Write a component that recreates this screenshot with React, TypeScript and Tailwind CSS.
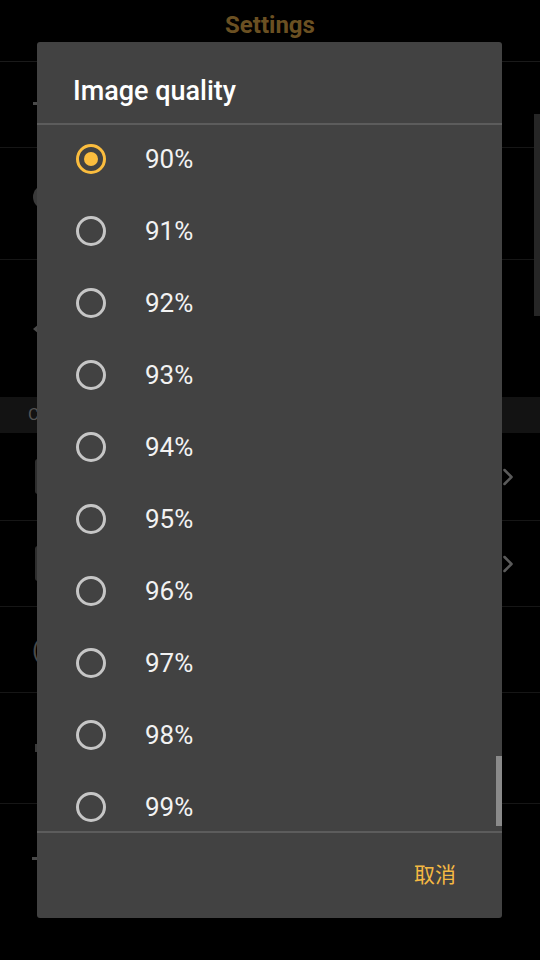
import { ChevronRight } from 'lucide-react';

const options = [90, 91, 92, 93, 94, 95, 96, 97, 98, 99, 100];

// dimmed settings page that sits behind the dialog
function BackgroundPage() {
  return (
    <div className="relative h-[960px] w-[540px] overflow-hidden bg-black">
      <div className="flex h-[62px] items-center justify-center border-b border-[#1a1a1a]">
        <h1 className="-mt-[12px] text-[24px] font-bold text-[#6b5022]">Settings</h1>
      </div>

      <div className="flex h-[86px] items-center border-b border-[#161616] pl-[33px]">
        <span className="-mt-[2px] h-[3px] w-[10px] bg-[#4a4a4a]" />
      </div>
      <div className="flex h-[112px] items-center border-b border-[#161616] pl-[33px]">
        <span className="-mt-[14px] h-[24px] w-[24px] rounded-full bg-[#3a3a3a]" />
      </div>
      <div className="flex h-[137px] items-center pl-[33px]">
        <span className="h-0 w-0 border-y-[5px] border-r-[6px] border-y-transparent border-r-[#4a4a4a]" />
      </div>

      <div className="flex h-[36px] items-center bg-[#131313] pl-[28px]">
        <span className="text-[17px] text-[#555]">C</span>
      </div>

      <div className="flex h-[88px] items-center justify-between border-b border-[#161616] pl-[35px] pr-[18px]">
        <span className="h-[35px] w-[20px] rounded-[3px] bg-[#2e2e2e]" />
        <ChevronRight className="h-[28px] w-[28px] text-[#5a5a5a]" strokeWidth={2.2} />
      </div>
      <div className="flex h-[86px] items-center justify-between border-b border-[#161616] pl-[35px] pr-[18px]">
        <span className="h-[35px] w-[20px] rounded-[3px] bg-[#2e2e2e]" />
        <ChevronRight className="h-[28px] w-[28px] text-[#5a5a5a]" strokeWidth={2.2} />
      </div>
      <div className="flex h-[86px] items-center border-b border-[#161616] pl-[32px]">
        <span className="text-[24px] leading-none text-[#4a4a4a]">(</span>
      </div>
      <div className="flex h-[111px] items-center border-b border-[#161616] pl-[35px]">
        <span className="h-[8px] w-[4px] bg-[#3a3a3a]" />
      </div>
      <div className="flex h-[110px] items-center pl-[32px]">
        <span className="-mt-[2px] h-[3px] w-[10px] bg-[#4a4a4a]" />
      </div>

      {/* page scrollbar */}
      <div className="absolute right-0 top-[114px] h-[202px] w-[6px] bg-[#262626]" />
    </div>
  );
}

function Radio({ checked }: { checked: boolean }) {
  return (
    <span
      className={`flex h-[30px] w-[30px] shrink-0 items-center justify-center rounded-full border-[3px] ${
        checked ? 'border-[#fbbd3e]' : 'border-[#c6c6c6]'
      }`}
    >
      {checked && <span className="h-[14px] w-[14px] rounded-full bg-[#fbbd3e]" />}
    </span>
  );
}

export default function App() {
  const selected = 90;

  return (
    <div className="relative h-[960px] w-[540px] overflow-hidden bg-black" style={{ fontFamily: 'Roboto, "Noto Sans CJK SC", sans-serif' }}>
      <BackgroundPage />

      {/* dialog */}
      <div className="absolute left-[37px] top-[42px] flex h-[876px] w-[465px] flex-col rounded-[3px] bg-[#424242]">
        <div className="flex h-[81px] items-end pb-[18px] pl-[36px]">
          <h2 className="text-[27px] font-medium leading-none text-white">Image quality</h2>
        </div>
        <div className="h-[2px] bg-[#5c5c5c]" />

        <div className="relative h-[706px] overflow-hidden">
          <div className="-mt-[2px] flex flex-col">
            {options.map((v) => (
              <div key={v} className="flex h-[72px] items-center gap-[39px] pl-[39px]">
                <Radio checked={v === selected} />
                <span className="text-[26px] leading-none text-[#f2f2f2]">{v}%</span>
              </div>
            ))}
          </div>
          <div className="absolute right-0 top-[631px] h-[70px] w-[6px] bg-[#8a8a8a]" />
        </div>

        <div className="h-[2px] bg-[#5c5c5c]" />
        <div className="flex flex-1 items-center justify-end pr-[40px]">
          <button className="px-[6px] py-[8px] text-[21px] leading-normal text-[#f5b942]">取消</button>
        </div>
      </div>
    </div>
  );
}
